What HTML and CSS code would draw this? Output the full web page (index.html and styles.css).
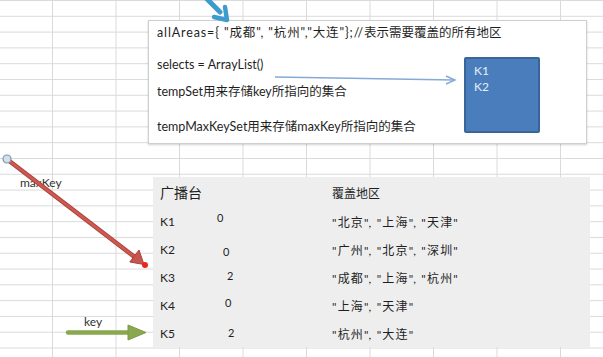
FILE: index.html
```html
<!DOCTYPE html>
<html lang="zh-CN">
<head>
<meta charset="utf-8">
<title>贪心算法 集合覆盖</title>
<link rel="stylesheet" href="styles.css">
</head>
<body>
<div class="sheet">
  <div class="card">
    <p class="line l1"><span class="code">allAreas={ "成都", "杭州","大连"};//</span>表示需要覆盖的所有地区</p>
    <div class="card-body">
      <div class="notes">
        <p class="line l2">selects = ArrayList()</p>
        <p class="line l3">tempSet用来存储key所指向的集合</p>
        <p class="line l4">tempMaxKeySet用来存储maxKey所指向的集合</p>
      </div>
      <div class="set">
        <span>K1</span>
        <span>K2</span>
      </div>
    </div>
  </div>

  <div class="table">
    <div class="row head">
      <span class="c-key h1">广播台</span>
      <span class="c-num"></span>
      <span class="h2">覆盖地区</span>
    </div>
    <div class="row">
      <span class="c-key">K1</span>
      <span class="c-num n1">0</span>
      <span class="c-area">"北京", "上海", "天津"</span>
    </div>
    <div class="row">
      <span class="c-key">K2</span>
      <span class="c-num n2">0</span>
      <span class="c-area">"广州", "北京", "深圳"</span>
    </div>
    <div class="row">
      <span class="c-key">K3</span>
      <span class="c-num n3">2</span>
      <span class="c-area">"成都", "上海", "杭州"</span>
    </div>
    <div class="row">
      <span class="c-key">K4</span>
      <span class="c-num n4">0</span>
      <span class="c-area">"上海", "天津"</span>
    </div>
    <div class="row">
      <span class="c-key">K5</span>
      <span class="c-num n5">2</span>
      <span class="c-area">"杭州", "大连"</span>
    </div>
  </div>

  <span class="tag tag-maxkey">maxKey</span>
  <span class="tag tag-key">key</span>

  <svg class="overlay" width="603" height="357" viewBox="0 0 603 357" aria-hidden="true">
    <!-- teal arrow at top -->
    <line x1="205" y1="-3" x2="220" y2="12" stroke="#3d9ccd" stroke-width="5" stroke-linecap="round"/>
    <polyline points="214,17 227,20 225,7" fill="none" stroke="#3d9ccd" stroke-width="4.5" stroke-linecap="round" stroke-linejoin="round"/>
    <!-- card arrow -->
    <line x1="275" y1="77" x2="454" y2="80" stroke="#86a9d6" stroke-width="1.4"/>
    <polyline points="446,76 455,80 446,84" fill="none" stroke="#86a9d6" stroke-width="1.4"/>
    <!-- red arrow -->
    <line x1="8" y1="160" x2="134" y2="256.5" stroke="#a8433f" stroke-width="4.5" stroke-linecap="round"/>
    <line x1="8" y1="160" x2="134" y2="256.5" stroke="#d0584f" stroke-width="2.6" stroke-linecap="round"/>
    <polygon points="144,264.5 129.8,262 139,250" fill="#c9544b" stroke="#a8433f" stroke-width="1"/>
    <circle cx="145" cy="265" r="3" fill="#e8261c"/>
    <circle cx="7" cy="159" r="4" fill="#cfe0ee" stroke="#8394a6" stroke-width="1.2"/>
    <!-- green arrow -->
    <line x1="68" y1="332.5" x2="131" y2="332.5" stroke="#89a84f" stroke-width="4.5" stroke-linecap="round"/>
    <polygon points="128,325 146,332.5 128,340" fill="#89a84f" stroke="#7b9a45" stroke-width="1" stroke-linejoin="round"/>
  </svg>
</div>
</body>
</html>
```

FILE: styles.css
```css
* { box-sizing: border-box; }

html, body {
  margin: 0;
  padding: 0;
}

body {
  width: 603px;
  height: 357px;
  overflow: hidden;
  background-color: #ffffff;
  background-image:
    linear-gradient(to right, #dadada 1px, transparent 1px),
    linear-gradient(to bottom, #dadada 1px, transparent 1px);
  background-size: 63.5px 15.8px;
  background-position: 52px 0, 0 0;
  font-family: "Lato", "Noto Sans CJK SC", sans-serif;
  color: #1f1f1f;
}

.sheet {
  position: relative;
  width: 603px;
  height: 357px;
  padding: 20px 0 0 148px;
}

/* ---------- code card ---------- */
.card {
  width: 439px;
  height: 124px;
  background: #ffffff;
  border: 1px solid #cfcfcf;
  box-shadow: 0 1px 2px rgba(0, 0, 0, 0.18);
  padding: 4px 0 0 8px;
}

.line {
  margin: 0;
  font-size: 12.5px;
  line-height: 16px;
  white-space: nowrap;
}

.code {
  letter-spacing: 0.88px;
}

.card-body {
  display: flex;
  justify-content: space-between;
  padding-right: 46px;
}

.notes {
  display: flex;
  flex-direction: column;
}

.l2 { margin-top: 16px; }
.l3 { margin-top: 11px; }
.l4 { margin-top: 19px; }

.set {
  margin-top: 16px;
  width: 76px;
  height: 76px;
  background: #4a7dbb;
  border: 2px solid #3a6598;
  border-radius: 2px;
  padding: 4px 0 0 8px;
  display: flex;
  flex-direction: column;
}

.set span {
  color: #e6edf7;
  font-size: 12px;
  line-height: 16px;
}

/* ---------- table ---------- */
.table {
  margin: 33px 0 0 5px;
  width: 437px;
  height: 170px;
  background: #eeeeee;
  padding-left: 7px;
}

.row {
  display: grid;
  grid-template-columns: 57px 115px 1fr;
  align-items: center;
  height: 28px;
}

.row.head { height: 30px; }

.c-key {
  font-size: 12px;
}

.h1 {
  font-size: 14px;
  white-space: nowrap;
}

.h2 {
  font-size: 12px;
  white-space: nowrap;
}

.c-num {
  font-size: 11px;
}

.c-area {
  font-size: 12px;
  letter-spacing: 1.2px;
  white-space: nowrap;
}

.n1 { padding: 0 0 8px 0; }
.n2 { padding: 4px 0 0 6px; }
.n3 { padding: 0 0 4px 10px; }
.n4 { padding: 0 0 6px 8px; }
.n5 { padding: 0 0 2px 11px; }

/* ---------- overlay labels & arrows ---------- */
.tag {
  position: absolute;
  font-size: 12px;
  line-height: 14px;
  color: #333333;
}

.tag-maxkey { left: 20px; top: 176px; }
.tag-key { left: 84px; top: 315px; }

.overlay {
  position: absolute;
  left: 0;
  top: 0;
  pointer-events: none;
}
```
